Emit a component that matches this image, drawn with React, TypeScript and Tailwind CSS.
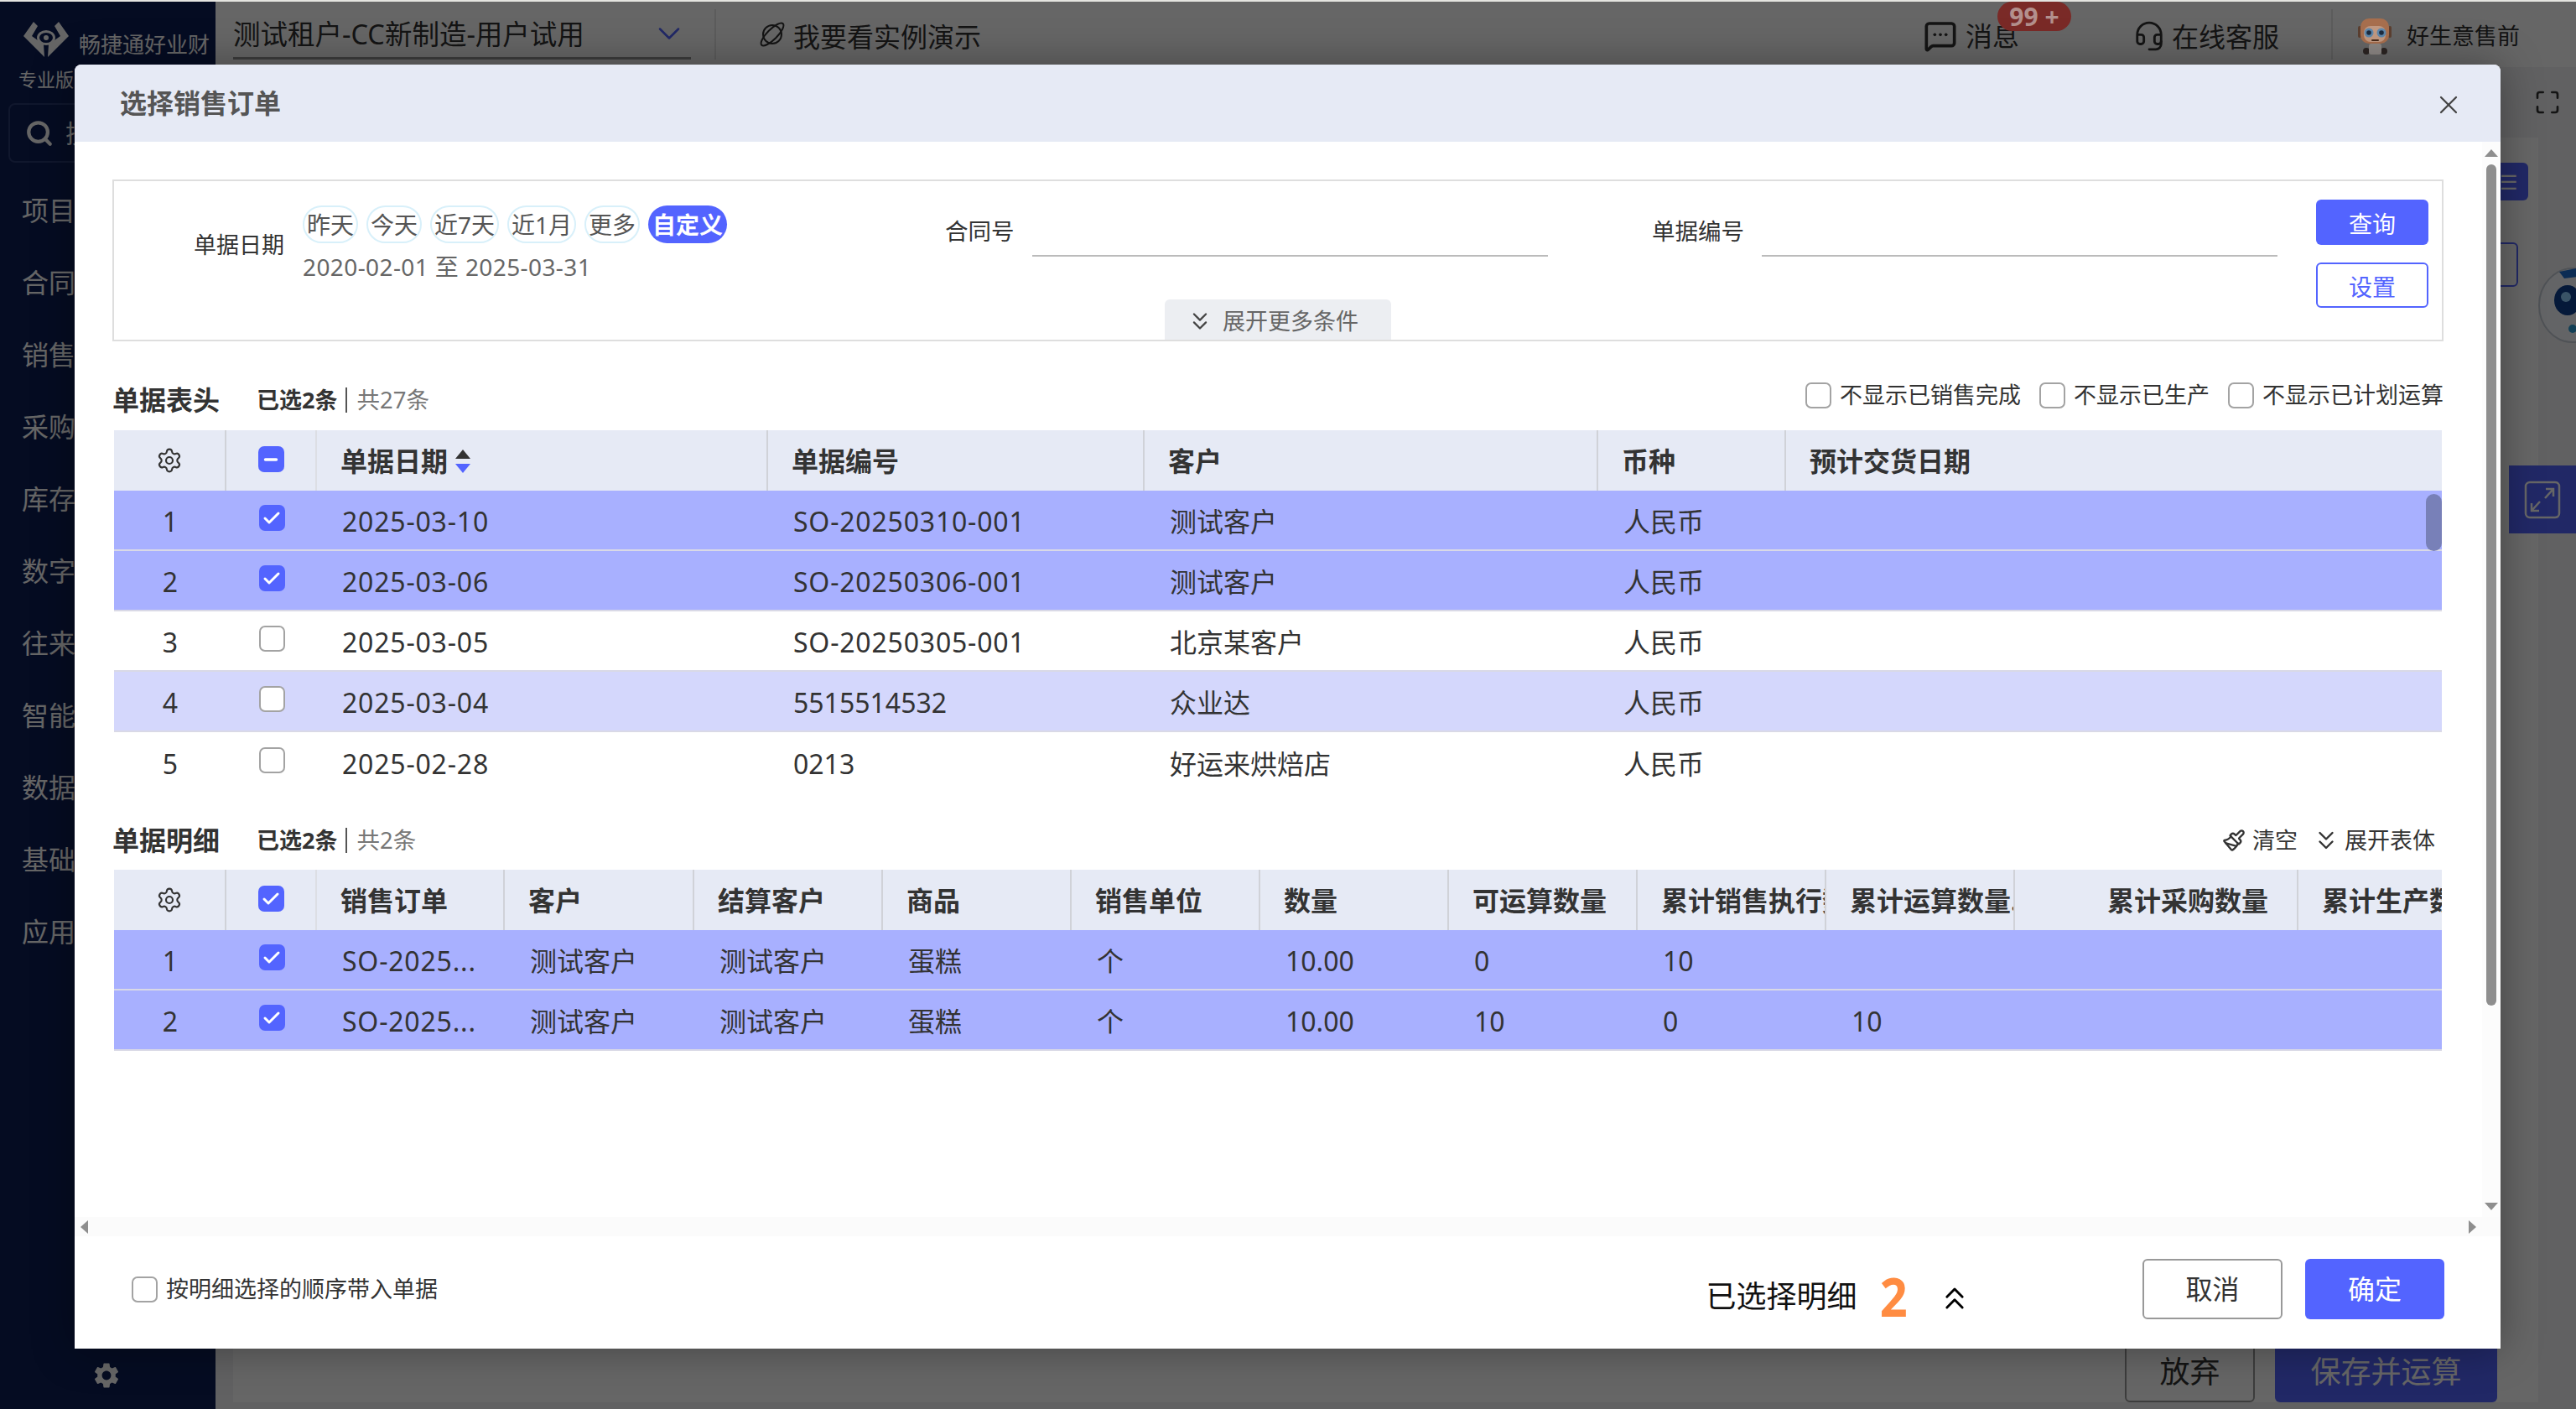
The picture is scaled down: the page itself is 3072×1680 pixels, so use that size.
import { Check, ChevronDown, ChevronsDown, ChevronsUp, Headset, Maximize, MessageSquareMore, Minus, Paintbrush, Search, Settings, X } from "lucide-react";
import { MdSettings } from "react-icons/md";

const navItems = ["项目", "合同", "销售", "采购", "库存", "数字", "往来", "智能", "数据", "基础", "应用"];
const quickDates = ["昨天", "今天", "近7天", "近1月", "更多"];

const headRows = [
  { no: "1", date: "2025-03-10", code: "SO-20250310-001", customer: "测试客户", checked: true, bg: "bg-[#a8b0ff]" },
  { no: "2", date: "2025-03-06", code: "SO-20250306-001", customer: "测试客户", checked: true, bg: "bg-[#a8b0ff]" },
  { no: "3", date: "2025-03-05", code: "SO-20250305-001", customer: "北京某客户", checked: false, bg: "bg-white" },
  { no: "4", date: "2025-03-04", code: "5515514532", customer: "众业达", checked: false, bg: "bg-[#d4d7fc]" },
  { no: "5", date: "2025-02-28", code: "0213", customer: "好运来烘焙店", checked: false, bg: "bg-white" },
];

const detailRows = [
  { no: "1", cells: ["SO-2025...", "测试客户", "测试客户", "蛋糕", "个", "10.00", "0", "10", "", "", ""] },
  { no: "2", cells: ["SO-2025...", "测试客户", "测试客户", "蛋糕", "个", "10.00", "10", "0", "10", "", ""] },
];

const detailColumns = ["销售订单", "客户", "结算客户", "商品", "销售单位", "数量", "可运算数量", "累计销售执行数量", "累计运算数量...", "累计采购数量", "累计生产数量"];

function Box({ state = "empty" }: { state?: "empty" | "checked" | "mixed" }) {
  if (state === "empty") {
    return <span className="block h-[31px] w-[31px] shrink-0 rounded-[7px] border-2 border-[#a3a3a3] bg-white" />;
  }
  return (
    <span className="flex h-[31px] w-[31px] shrink-0 items-center justify-center rounded-[7px] bg-[#5364ff] text-white">
      {state === "checked" ? <Check size={24} strokeWidth={3} /> : <Minus size={22} strokeWidth={4} />}
    </span>
  );
}

function HeadCell({ children, right }: { children?: React.ReactNode; right?: boolean }) {
  return (
    <div className={`flex h-full items-center overflow-hidden whitespace-nowrap border-r-2 border-[#d0d2d8] pl-[28px] pt-[2px] text-[32px] font-bold text-[#333] last:border-r-0 ${right ? "justify-end pr-[34px]" : ""}`}>
      {children}
    </div>
  );
}

function RowCell({ children }: { children?: string }) {
  const hasDash = children?.includes("-");
  return (
    <div className={`flex h-full items-center overflow-hidden whitespace-nowrap pl-[30px] pt-[4px] text-[32px] text-[#333] ${hasDash ? "tracking-[0.8px]" : ""}`}>
      {children}
    </div>
  );
}

function SortArrows() {
  return (
    <svg width="20" height="30" viewBox="0 0 20 30" className="ml-[8px]">
      <path d="M10 1 L19 12 H1 Z" fill="#333" />
      <path d="M1 18 H19 L10 29 Z" fill="#5364ff" />
    </svg>
  );
}

function SectionTitle({ title, selected, total }: { title: string; selected: string; total: string }) {
  return (
    <div className="flex items-center">
      <span className="w-[172px] text-[32px] font-bold leading-[36px] text-[#333]">{title}</span>
      <span className="text-[27px] font-bold leading-[36px] text-[#333]">{selected}</span>
      <span className="ml-[10px] mr-[11px] h-[30px] w-[2px] bg-[#555]" />
      <span className="text-[27.5px] leading-[36px] text-[#777]">{total}</span>
    </div>
  );
}

function OptionCheck({ label }: { label: string }) {
  return (
    <label className="flex items-center gap-[10px] text-[27px] text-[#333]">
      <Box />
      <span>{label}</span>
    </label>
  );
}

function Logo() {
  return (
    <svg width="54" height="46" viewBox="0 0 54 46" fill="#fff">
      <path d="M12 1 L17 6 L10 18 L24 28 L25 43 L0 18 Z" />
      <path d="M42 1 L37 6 L44 18 L30 28 L29 43 L54 18 Z" />
      <ellipse cx="27" cy="20" rx="9.5" ry="7.5" fill="none" stroke="#fff" strokeWidth="3" />
      <circle cx="27" cy="20" r="3" />
    </svg>
  );
}

function PlanetIcon() {
  return (
    <svg width="34" height="34" viewBox="0 0 34 34" fill="none" stroke="#333" strokeWidth="2">
      <circle cx="17" cy="17" r="11" />
      <ellipse cx="17" cy="17" rx="18" ry="6" transform="rotate(-45 17 17)" />
    </svg>
  );
}

function Avatar() {
  // the photo keeps its colour through the dimmed page, so it sits above the overlay
  return (
    <svg width="40" height="44" viewBox="0 0 40 44" className="relative z-10">
      <rect x="0" y="9" width="4" height="14" rx="2" fill="#5c3f30" />
      <rect x="36" y="9" width="4" height="14" rx="2" fill="#5c3f30" />
      <circle cx="10" cy="39" r="4" fill="#2b2422" />
      <circle cx="31" cy="39" r="4" fill="#2b2422" />
      <rect x="13" y="30" width="15" height="13" rx="3" fill="#8d8885" />
      <rect x="3" y="0" width="34" height="30" rx="10" fill="#a86f4e" />
      <rect x="7" y="9" width="26" height="19" rx="8" fill="#c39a82" />
      <circle cx="13" cy="17" r="5.5" fill="#5f89ad" />
      <circle cx="28" cy="17" r="5.5" fill="#5f89ad" />
      <circle cx="13" cy="17" r="2.8" fill="#1c2b3f" />
      <circle cx="28" cy="17" r="2.8" fill="#1c2b3f" />
      <rect x="16" y="25" width="9" height="2" rx="1" fill="#4a2c1c" />
    </svg>
  );
}

function Robot() {
  return (
    <svg width="60" height="92" viewBox="0 0 60 92" className="absolute left-[3026px] top-[316px]">
      <ellipse cx="42" cy="46" rx="40" ry="44" fill="#f8fbff" stroke="#c6ccd6" strokeWidth="2" />
      <ellipse cx="36" cy="40" rx="16" ry="18" fill="#0d3f8f" />
      <circle cx="34" cy="36" r="6" fill="#8fd0ff" />
      <path d="M26 6 L46 2 L48 12 L32 14 Z" fill="#1d6fd1" />
      <circle cx="42" cy="74" r="5" fill="#2f9fd8" />
    </svg>
  );
}

function Background() {
  return (
    <div className="flex h-full w-full">
      <aside className="flex h-full w-[257px] shrink-0 flex-col bg-[#0d1e55] text-white">
        <div className="flex items-center gap-[12px] pl-[28px] pt-[20px]">
          <Logo />
          <span className="mt-[12px] whitespace-nowrap text-[26px]">畅捷通好业财</span>
        </div>
        <div className="pl-[22px] pt-[6px] text-[22px] leading-[30px]">专业版</div>
        <div className="mx-[10px] mt-[14px] flex h-[71px] items-center rounded-[8px] border-2 border-[#2a3a70] pl-[18px]">
          <Search size={34} strokeWidth={3} />
          <span className="ml-[14px] text-[30px]">搜索</span>
        </div>
        <nav className="mt-[14px] flex flex-col pl-[26px]">
          {navItems.map((item) => (
            <span key={item} className="text-[32px] leading-[86px]">
              {item}
            </span>
          ))}
        </nav>
        <div className="mt-auto flex h-[76px] items-start justify-center pr-[4px] pt-[18px]">
          <MdSettings size={36} />
        </div>
      </aside>

      <div className="flex min-w-0 flex-1 flex-col bg-[#f2f3f5]">
        <header className="flex h-[78px] shrink-0 items-center bg-white pl-[21px] pr-[67px] text-[#333]">
          <div className="flex h-[60px] w-[546px] items-center justify-between border-b-[3px] border-[#999] pr-[4px]">
            <span className="mt-[4px] whitespace-nowrap text-[32.5px]">测试租户-CC新制造-用户试用</span>
            <ChevronDown size={44} strokeWidth={1.4} className="text-[#5364ff]" />
          </div>
          <span className="ml-[28px] h-[60px] w-[2px] bg-[#e6e6e6]" />
          <span className="ml-[50px]">
            <PlanetIcon />
          </span>
          <span className="ml-[8px] mt-[6px] whitespace-nowrap text-[32px]">我要看实例演示</span>
          <div className="relative ml-auto mt-[4px] flex items-center">
            <MessageSquareMore size={40} strokeWidth={2.2} />
            <span className="ml-[10px] text-[32px]">消息</span>
            <span className="absolute left-[88px] top-[-17px] z-10 flex h-[35px] w-[88px] items-center justify-center rounded-full bg-[#7a2a27] text-[30px] font-bold text-[#b3908d]">
              99 +
            </span>
          </div>
          <Headset size={38} strokeWidth={1.8} className="ml-[136px] mt-[4px]" />
          <span className="ml-[8px] mt-[6px] whitespace-nowrap text-[32px]">在线客服</span>
          <span className="ml-[62px] h-[60px] w-[2px] bg-[#e6e6e6]" />
          <span className="ml-[30px] mt-[6px]">
            <Avatar />
          </span>
          <span className="ml-[18px] mt-[4px] whitespace-nowrap text-[27px]">好生意售前</span>
        </header>
        <div className="flex h-[84px] shrink-0 items-center justify-end pr-[18px] text-[#333]">
          <Maximize size={32} />
        </div>
        <main className="mb-[8px] ml-[21px] mr-[45px] flex min-h-0 flex-1 flex-col items-end bg-white">
          <div className="mr-[12px] mt-[30px] flex h-[45px] w-[120px] items-center justify-end rounded-[6px] bg-[#5364ff] pr-[12px] text-[24px] text-white">
            ☰
          </div>
          <div className="mr-[24px] mt-[50px] h-[53px] w-[120px] rounded-[6px] border-2 border-[#5364ff]" />
          <div className="mt-auto flex h-[92px] w-full items-end justify-end gap-[24px] pr-[49px]">
            <button className="h-[72px] w-[155px] rounded-[6px] border-2 border-[#999] text-[36px] text-[#333]">放弃</button>
            <button className="h-[72px] w-[265px] rounded-[6px] bg-[#5364ff] text-[36px] text-white">保存并运算</button>
          </div>
        </main>
      </div>
    </div>
  );
}

function FilterPanel() {
  return (
    <div className="relative ml-[45px] mt-[45px] flex h-[193px] w-[2780px] shrink-0 items-start border-2 border-[#dedede] pl-[95px] pt-[22px]">
      <div className="mt-[7px] flex w-[896px] shrink-0 items-center gap-[22px]">
        <span className="mt-[2px] text-[27px] text-[#333]">单据日期</span>
        <div className="flex flex-col">
          <div className="flex gap-[10px]">
            {quickDates.map((d) => (
              <span key={d} className="flex h-[45px] items-center rounded-full border-2 border-[#d8f0fa] px-[3px] text-[28px] text-[#555]">
                {d}
              </span>
            ))}
            <span className="flex h-[45px] items-center rounded-full bg-[#5364ff] px-[5px] text-[28px] font-bold text-white">自定义</span>
          </div>
          <span className="mt-[9px] text-[28px] leading-[38px] tracking-[0.4px] text-[#666]">2020-02-01 至 2025-03-31</span>
        </div>
      </div>
      <div className="mt-[5px] flex h-[63px] w-[843px] shrink-0">
        <span className="mt-[16px] text-[27.5px] leading-[34px] text-[#333]">合同号</span>
        <div className="ml-[21px] w-[615px] border-b-2 border-[#bbb]" />
      </div>
      <div className="mt-[5px] flex h-[63px] w-[792px] shrink-0">
        <span className="mt-[16px] text-[27.5px] leading-[34px] text-[#333]">单据编号</span>
        <div className="ml-[21px] w-[615px] border-b-2 border-[#bbb]" />
      </div>
      <div className="flex w-[134px] shrink-0 flex-col gap-[21px]">
        <button className="h-[54px] rounded-[6px] bg-[#5364ff] pt-[4px] text-[28px] text-white">查询</button>
        <button className="h-[54px] rounded-[6px] border-2 border-[#5364ff] bg-white pt-[4px] text-[28px] text-[#5364ff]">设置</button>
      </div>
      <div className="absolute bottom-0 left-1/2 flex h-[48px] w-[270px] -translate-x-1/2 items-center justify-center gap-[10px] rounded-t-[6px] bg-[#eceef2] pr-[14px] pt-[4px] text-[27px] text-[#666]">
        <ChevronsDown size={34} strokeWidth={1.6} className="text-[#444]" />
        <span>展开更多条件</span>
      </div>
    </div>
  );
}

function HeadTable() {
  return (
    <div className="relative ml-[2px] w-[2776px]">
      <div className="grid h-[72px] grid-cols-[134px_108px_538px_449px_541px_224px_782px] items-stretch bg-[#e6eaf5]">
        <div className="flex items-center justify-center border-r-2 border-[#d0d2d8]">
          <Settings size={32} strokeWidth={1.6} className="text-[#333]" />
        </div>
        <div className="flex items-center justify-center border-r-2 border-[#dcdee4] pb-[3px]">
          <Box state="mixed" />
        </div>
        <HeadCell>
          单据日期
          <SortArrows />
        </HeadCell>
        <HeadCell>单据编号</HeadCell>
        <HeadCell>客户</HeadCell>
        <HeadCell>币种</HeadCell>
        <HeadCell>预计交货日期</HeadCell>
      </div>
      {headRows.map((row, i) => (
        <div
          key={row.no}
          className={`grid h-[72px] grid-cols-[134px_108px_538px_449px_541px_224px_782px] items-stretch ${i < headRows.length - 1 ? "border-b-2 border-[#d9d9e6]" : ""} ${row.bg}`}
        >
          <div className="flex items-center justify-center pt-[4px] text-[32px] text-[#333]">{row.no}</div>
          <div className="flex items-center justify-center pb-[5px]">
            <Box state={row.checked ? "checked" : "empty"} />
          </div>
          <RowCell>{row.date}</RowCell>
          <RowCell>{row.code}</RowCell>
          <RowCell>{row.customer}</RowCell>
          <RowCell>人民币</RowCell>
          <RowCell />
        </div>
      ))}
      <div className="absolute right-0 top-[76px] h-[68px] w-[19px] rounded-full bg-[#7880b8]" />
    </div>
  );
}

function DetailTable() {
  const grid = "grid-cols-[134px_108px_224px_226px_225px_225px_225px_225px_225px_225px_225px_338px_171px]";
  return (
    <div className="ml-[2px] w-[2776px]">
      <div className={`grid h-[72px] items-stretch bg-[#e6eaf5] ${grid}`}>
        <div className="flex items-center justify-center border-r-2 border-[#d0d2d8]">
          <Settings size={32} strokeWidth={1.6} className="text-[#333]" />
        </div>
        <div className="flex items-center justify-center border-r-2 border-[#dcdee4] pb-[3px]">
          <Box state="checked" />
        </div>
        {detailColumns.map((col, i) => (
          <HeadCell key={col} right={i === 9}>
            {col}
          </HeadCell>
        ))}
      </div>
      {detailRows.map((row) => (
        <div key={row.no} className={`grid h-[72px] items-stretch border-b-2 border-[#d9d9e6] bg-[#a8b0ff] ${grid}`}>
          <div className="flex items-center justify-center pt-[4px] text-[32px] text-[#333]">{row.no}</div>
          <div className="flex items-center justify-center pb-[5px]">
            <Box state="checked" />
          </div>
          {row.cells.map((cell, i) => (
            <RowCell key={i}>{cell}</RowCell>
          ))}
        </div>
      ))}
    </div>
  );
}

function Scrollbars() {
  return (
    <>
      <div className="absolute bottom-0 right-0 top-0 w-[22px] bg-[#fcfcfc]">
        <svg width="16" height="9" viewBox="0 0 16 9" className="absolute left-[3px] top-[9px]">
          <path d="M8 0 L16 9 H0 Z" fill="#8e8e8e" />
        </svg>
        <div className="absolute left-[5px] top-[27px] h-[1003px] w-[12px] rounded-full bg-[#8e8e8e]" />
        <svg width="16" height="9" viewBox="0 0 16 9" className="absolute bottom-[31px] left-[3px]">
          <path d="M0 0 H16 L8 9 Z" fill="#8e8e8e" />
        </svg>
      </div>
      <div className="absolute bottom-0 left-0 right-0 h-[23px] bg-[#fbfbfb]">
        <svg width="9" height="16" viewBox="0 0 9 16" className="absolute left-[7px] top-[4px]">
          <path d="M9 0 V16 L0 8 Z" fill="#8e8e8e" />
        </svg>
        <svg width="9" height="16" viewBox="0 0 9 16" className="absolute right-[29px] top-[4px]">
          <path d="M0 0 L9 8 L0 16 Z" fill="#8e8e8e" />
        </svg>
      </div>
    </>
  );
}

function Dialog() {
  return (
    <div className="absolute left-[89px] top-[75px] z-20 flex h-[1531px] w-[2893px] flex-col overflow-hidden rounded-t-[8px] bg-white shadow-[0_0_50px_rgba(0,0,0,0.35)]">
      <div className="flex h-[92px] shrink-0 items-center justify-between bg-[#e6eaf5] pl-[54px] pr-[44px]">
        <span className="text-[32px] font-bold text-[#555]">选择销售订单</span>
        <X size={36} strokeWidth={1.5} className="mt-[4px] text-[#444]" />
      </div>

      <div className="relative flex min-h-0 flex-1 flex-col">
        <FilterPanel />

        <div className="ml-[45px] mt-[52px] w-[2780px]">
          <div className="mb-[18px] flex h-[36px] items-center justify-between">
            <SectionTitle title="单据表头" selected="已选2条" total="共27条" />
            <div className="-mt-[12px] flex items-center gap-[22px]">
              <OptionCheck label="不显示已销售完成" />
              <OptionCheck label="不显示已生产" />
              <OptionCheck label="不显示已计划运算" />
            </div>
          </div>
          <HeadTable />
        </div>

        <div className="ml-[45px] mt-[39px] w-[2780px]">
          <div className="mb-[17px] flex h-[36px] items-center justify-between">
            <SectionTitle title="单据明细" selected="已选2条" total="共2条" />
            <div className="flex items-center pr-[10px] text-[27px] text-[#333]">
              <Paintbrush size={28} strokeWidth={2} className="mr-[8px]" />
              <span>清空</span>
              <ChevronsDown size={36} strokeWidth={1.6} className="ml-[16px] mr-[4px]" />
              <span>展开表体</span>
            </div>
          </div>
          <DetailTable />
        </div>

        <Scrollbars />
      </div>

      <div className="flex h-[134px] shrink-0 items-center pb-[8px] pl-[68px] pr-[67px]">
        <label className="flex items-center gap-[10px] text-[27px] text-[#333]">
          <Box />
          <span>按明细选择的顺序带入单据</span>
        </label>
        <div className="ml-auto mt-[17px] flex items-center">
          <span className="text-[36px] text-[#111]">已选择明细</span>
          <span className="ml-[26px] scale-x-90 text-[64px] font-bold leading-[60px] text-[#ff8c42]">2</span>
          <ChevronsUp size={44} strokeWidth={1.6} className="ml-[32px] mt-[4px] text-black" />
        </div>
        <button className="ml-[202px] h-[72px] w-[167px] rounded-[6px] border-2 border-[#999] text-[32px] text-[#333]">取消</button>
        <button className="ml-[27px] h-[72px] w-[166px] rounded-[6px] bg-[#5364ff] text-[32px] text-white">确定</button>
      </div>
    </div>
  );
}

export default function App() {
  return (
    <div className="flex h-[1680px] w-[3072px] flex-col overflow-hidden font-['Noto_Sans','Noto_Sans_CJK_SC',sans-serif]">
      <div className="h-[2px] shrink-0 bg-[#e4e4e0]" />
      <div className="relative min-h-0 flex-1">
        <Background />
        <Robot />
        <div className="absolute right-0 top-[553px] flex h-[81px] w-[80px] items-center justify-center bg-[#5364ff]">
          <svg width="44" height="46" viewBox="0 0 44 46" fill="none" stroke="#fff" strokeWidth="2.5">
            <rect x="2" y="2" width="40" height="42" rx="5" />
            <path d="M26 10 H35 V19 M35 10 L25 21 M9 27 V36 H18 M9 36 L19 25" />
          </svg>
        </div>
        <div className="absolute inset-0 bg-black/60" />
        <Dialog />
      </div>
    </div>
  );
}
